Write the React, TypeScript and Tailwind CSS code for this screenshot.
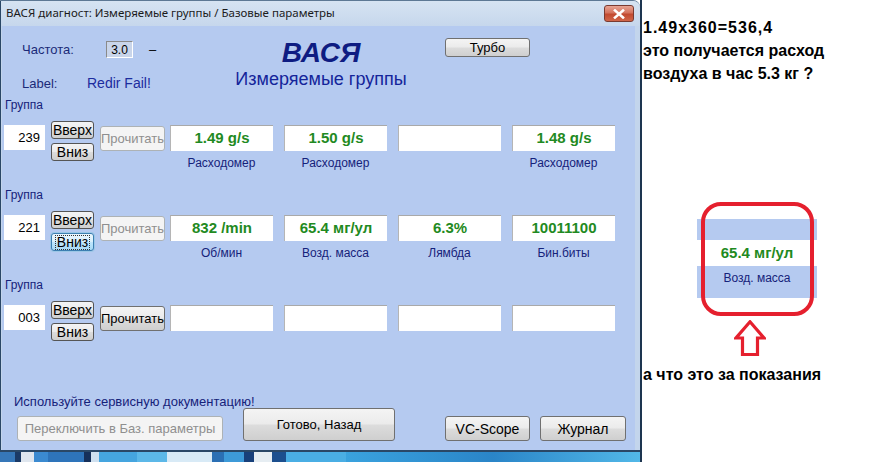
import React from "react";

const winBtn =
  "border border-[#707070] rounded-[3px] bg-[linear-gradient(#f4f4f4,#ebebeb_48%,#dcdcdc_52%,#cfcfcf)] text-black flex items-center justify-center text-[13px] leading-none";
const smallBtn =
  "border border-[#555] rounded-[3px] bg-[linear-gradient(#f4f4f4,#ebebeb_48%,#dcdcdc_52%,#cfcfcf)] text-black flex items-center justify-center text-[14px] leading-none w-[43px] h-[18px]";
const smallBtnFocus =
  "border border-[#3c7fb1] rounded-[3px] bg-[linear-gradient(#eaf6fd,#d9f0fc_48%,#bee6fd_52%,#a7d9f5)] text-black flex items-center justify-center text-[14px] leading-none w-[43px] h-[18px] shadow-[0_0_0_1px_#9cc7e6]";
const disabledBtn =
  "border border-[#adb2b5] rounded-[3px] bg-[#f4f4f4] text-[#8f8f8f] flex items-center justify-center text-[13px] leading-none";

type GroupProps = {
  num: string;
  readEnabled: boolean;
  focusDown?: boolean;
  values: string[];
  labels: string[];
};

function Group({ num, readEnabled, focusDown, values, labels }: GroupProps) {
  return (
    <div className="h-[90px] flex flex-col">
      <div className="h-[14px] leading-[14px] text-[12px] text-[#15227a] pl-[3px]">Группа</div>
      <div className="flex items-start mt-[9px]">
        <div className="mt-[4px] ml-[2px] w-[41px] h-[25px] bg-white text-[13px] text-right pr-[5px] leading-[25px] text-black">
          {num}
        </div>
        <div className="ml-[6px] flex flex-col gap-[4px]">
          <div className={smallBtn}>Вверх</div>
          <div className={focusDown ? smallBtnFocus : smallBtn}>
            {focusDown ? (
              <span className="border border-dotted border-[#333] px-[1px] leading-[13px]">Вниз</span>
            ) : (
              "Вниз"
            )}
          </div>
        </div>
        <div
          className={
            (readEnabled ? winBtn : disabledBtn) + " ml-[6px] mt-[5px] w-[65px] h-[25px]"
          }
        >
          Прочитать
        </div>
        <div className="ml-[5px] mt-[4px] grid grid-cols-4 gap-x-[11px]">
          {values.map((v, i) => (
            <div key={i} className="flex flex-col items-center">
              <div className="w-[103px] h-[26px] bg-white border-t border-l border-t-[#a9a9a9] border-l-[#b5b5b5] flex items-center justify-center text-[15px] font-bold text-[#1f8a22]">
                {v}
              </div>
              {labels[i] !== undefined && (
                <div className="mt-[5px] h-[14px] leading-[14px] text-[12px] text-[#15227a]">
                  {labels[i]}
                </div>
              )}
            </div>
          ))}
        </div>
      </div>
    </div>
  );
}

export default function App() {
  return (
    <div
      className="w-[874px] h-[462px] bg-white flex overflow-hidden"
      style={{ fontFamily: '"Liberation Sans", Arial, sans-serif' }}
    >
      {/* Left: window */}
      <div className="w-[642px] h-full shrink-0 flex flex-col border-r-2 border-r-[#1d3550]">
        <div className="flex-1 flex flex-col border-l border-t border-b-2 border-l-[#2a4766] border-t-[#5d7894] border-b-[#2a4766] bg-[#c3d5ec] rounded-tr-[7px]">
          {/* Title bar */}
          <div className="h-[25px] flex items-start justify-between bg-[linear-gradient(#d6e3f2,#c6d7ec)] rounded-tr-[7px]">
            <div
              className="pl-[5px] pt-[4px] text-[11.5px] leading-[16px] text-[#1b1b1b] whitespace-nowrap"
              style={{ fontFamily: '"Noto Sans", "Open Sans", sans-serif' }}
            >
              ВАСЯ диагност: Измеряемые группы / Базовые параметры
            </div>
            <div className="mt-[4px] mr-[6px] w-[30px] h-[17px] rounded-[3px] border border-[#7a3a30] bg-[linear-gradient(#e8a493,#d4735e_45%,#c24a30_55%,#d0664a)] flex items-center justify-center">
              <svg width="12" height="10" viewBox="0 0 12 10">
                <path d="M2 1.5 L10 8.5 M10 1.5 L2 8.5" stroke="#ffffff" strokeWidth="2.6" strokeLinecap="square" />
              </svg>
            </div>
          </div>
          {/* Client area */}
          <div className="flex-1 ml-[1px] mr-[5px] bg-[#b5caf0] flex flex-col">
            {/* Header */}
            <div className="h-[72px] flex items-start">
              <div className="w-[200px] pl-[20px] pt-[15px] flex flex-col">
                <div className="h-[17px] flex items-center text-[13px] text-[#1b2a78]">
                  <div className="w-[84px]">Частота:</div>
                  <div className="w-[27px] h-[17px] bg-[#c9d5ea] border-t border-l border-t-[#8a8a8a] border-l-[#8a8a8a] border-b border-r border-b-white border-r-white text-[12px] text-black flex items-center justify-center">
                    3.0
                  </div>
                  <div className="ml-[16px] text-black">–</div>
                </div>
                <div className="h-[17px] mt-[17px] flex items-center text-[#1b2a78]">
                  <div className="w-[65px] text-[13px]">Label:</div>
                  <div className="text-[14px] text-[#1c2c9e]">Redir Fail!</div>
                </div>
              </div>
              <div className="w-[238px] pt-[11px] flex flex-col items-center text-[#0e1c82]">
                <div className="h-[32px] leading-[32px] text-[28px] font-bold italic">ВАСЯ</div>
                <div className="h-[20px] leading-[20px] text-[18px] text-[#14249a]">Измеряемые группы</div>
              </div>
              <div className={winBtn + " ml-[5px] mt-[12px] w-[85px] h-[19px]"}>Турбо</div>
            </div>

            <Group
              num="239"
              readEnabled={false}
              values={["1.49 g/s", "1.50 g/s", "", "1.48 g/s"]}
              labels={["Расходомер", "Расходомер", "", "Расходомер"]}
            />
            <Group
              num="221"
              readEnabled={false}
              focusDown
              values={["832 /min", "65.4 мг/ул", "6.3%", "10011100"]}
              labels={["Об/мин", "Возд. масса", "Лямбда", "Бин.биты"]}
            />
            <Group num="003" readEnabled={true} values={["", "", "", ""]} labels={[]} />

            {/* Bottom */}
            <div className="mt-auto pb-[9px] flex items-end">
              <div className="w-[221px] shrink-0 flex flex-col">
                <div className="pl-[12px] h-[14px] leading-[14px] text-[13px] text-[#15227a] whitespace-nowrap">
                  Используйте сервисную документацию!
                </div>
                <div className={disabledBtn + " ml-[15px] mt-[7px] w-[206px] h-[25px] whitespace-nowrap"}>
                  Переключить в Баз. параметры
                </div>
              </div>
              <div className={winBtn + " ml-[20px] w-[152px] h-[33px]"}>Готово, Назад</div>
              <div className={winBtn + " ml-[50px] w-[85px] h-[25px] text-[14px]"}>VC-Scope</div>
              <div className={winBtn + " ml-[10px] w-[86px] h-[25px] text-[14px]"}>Журнал</div>
            </div>
          </div>
        </div>
        {/* Taskbar strip */}
        <div className="h-[10px] flex bg-[linear-gradient(#2e78bf,#1e5d9c)]">
          <div className="w-[15px] bg-[#3677b8]" />
          <div className="w-[6px] bg-[#1b3a66]" />
          <div className="w-[13px] bg-[#dfe6ee]" />
          <div className="w-[14px] bg-[#3b8ad0]" />
          <div className="w-[36px] bg-[#2e74ba]" />
          <div className="w-[7px] bg-[#16305a]" />
          <div className="w-[8px] bg-[#cfe0ef]" />
          <div className="w-[38px] bg-[#45a5df]" />
          <div className="w-[30px] bg-[#5cb8e8]" />
          <div className="w-[45px] bg-[#d8eaf6]" />
          <div className="w-[12px] bg-[#2a6fb4]" />
          <div className="w-[20px] bg-[#3d9ad8]" />
          <div className="w-[10px] bg-[#18407a]" />
          <div className="w-[18px] bg-[#e6edf2]" />
          <div className="w-[14px] bg-[#1c4f8e]" />
          <div className="w-[60px] bg-[#4aaee4]" />
          <div className="flex-1 bg-[linear-gradient(90deg,#3aa2de,#2a85c8,#52b8e8)]" />
        </div>
      </div>

      {/* Right: annotations */}
      <div className="flex-1 flex flex-col pl-[1px] pt-[16px] text-black">
        <div className="text-[16px] font-bold leading-[23px] whitespace-nowrap">
          <div className="tracking-[1px]">1.49x360=536,4</div>
          <div>это получается расход</div>
          <div>воздуха в час 5.3 кг ?</div>
        </div>
        <div className="relative ml-[54px] mt-[134px] w-[120px] h-[79px] bg-[#b5caf0] flex flex-col">
          <div className="h-[21px]" />
          <div className="h-[26px] bg-white flex items-center justify-center text-[15px] font-bold text-[#1f8a22]">
            65.4 мг/ул
          </div>
          <div className="mt-[5px] h-[14px] leading-[14px] text-center text-[12px] text-[#15227a]">
            Возд. масса
          </div>
          <div className="absolute left-[4px] top-[-17px] w-[113px] h-[114px] rounded-[20px] border-4 border-[#e5202e]" />
        </div>
        <div className="ml-[91px] mt-[22px] w-[32px] h-[36px]">
          <svg width="32" height="36" viewBox="0 0 32 36">
            <path
              d="M16 1.8 L30 18 L23.5 18 L23.5 34.5 L8.5 34.5 L8.5 18 L2 18 Z"
              fill="#ffffff"
              stroke="#e5202e"
              strokeWidth="3.2"
              strokeLinejoin="miter"
            />
          </svg>
        </div>
        <div className="mt-[7px] text-[16px] font-bold leading-[23px] whitespace-nowrap">а что это за показания</div>
      </div>
    </div>
  );
}
